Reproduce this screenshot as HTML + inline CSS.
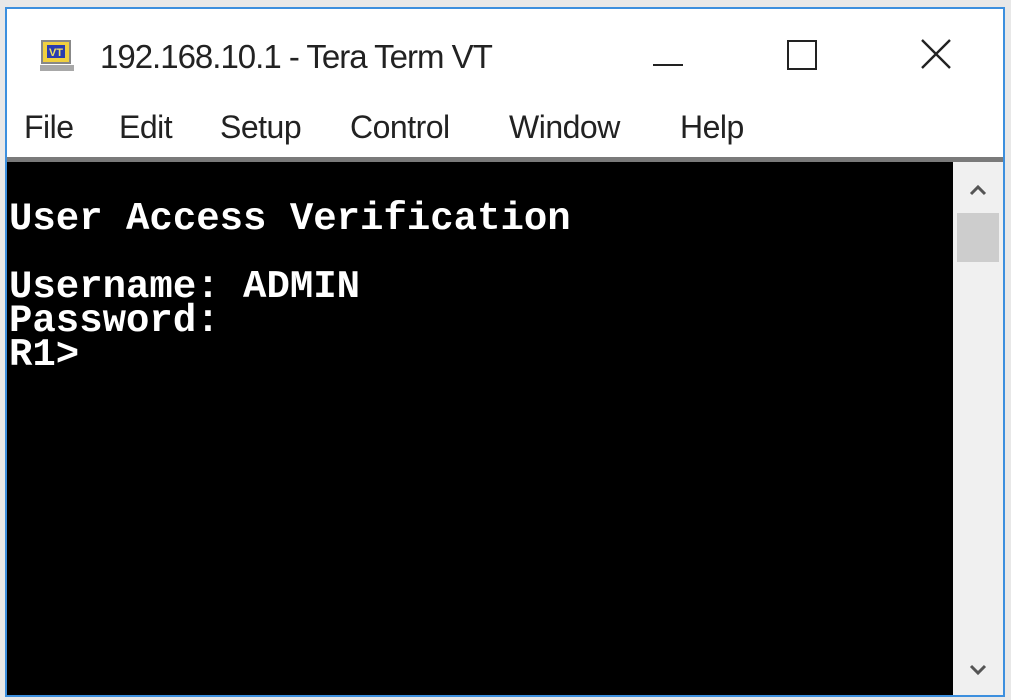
<!DOCTYPE html>
<html><head><style>
*{box-sizing:border-box}
body{margin:0;width:1011px;height:700px;background:#e8e8e8;position:relative;overflow:hidden;font-family:"Liberation Sans",sans-serif}
.win{position:absolute;left:5px;top:7px;width:1000px;height:690px;background:#fff;border:2px solid #3c8fde}
.t{position:absolute;color:#222;white-space:nowrap}
.term{position:absolute;left:0;top:148px;width:946px;height:538px;background:#000;border-top:5px solid #7a7a7a}
.sb{position:absolute;left:946px;top:148px;width:50px;height:538px;background:#f0f0f0;border-top:5px solid #7a7a7a}
pre{margin:0;position:absolute;left:2px;top:40px;color:#fff;font:bold 39px/34px "Liberation Mono",monospace}
</style></head><body>
<div class="win">
  <svg style="position:absolute;left:32px;top:30px" width="36" height="36" viewBox="0 0 36 36">
    <rect x="3" y="2" width="28" height="22" fill="#f0d040" stroke="#888" stroke-width="2"/>
    <rect x="8" y="6" width="18" height="13" fill="#2a3cb0"/>
    <text x="17" y="17" fill="#f0e060" font-size="11" font-weight="bold" text-anchor="middle" font-family="Liberation Sans">VT</text>
    <rect x="1" y="26" width="34" height="6" fill="#a8a8a8"/>
  </svg>
  <div class="t" style="left:93px;top:29px;font-size:33px;letter-spacing:-1px">192.168.10.1 - Tera Term VT</div>
  <div style="position:absolute;left:646px;top:55px;width:30px;height:2px;background:#222"></div>
  <div style="position:absolute;left:780px;top:31px;width:30px;height:30px;border:2px solid #222"></div>
  <svg style="position:absolute;left:913px;top:29px" width="32" height="32"><path d="M2 2L30 30M30 2L2 30" stroke="#222" stroke-width="2.4"/></svg>
  <div class="t" style="left:17px;top:100px;font-size:32px;letter-spacing:-0.5px">File</div>
  <div class="t" style="left:112px;top:100px;font-size:32px;letter-spacing:-0.5px">Edit</div>
  <div class="t" style="left:213px;top:100px;font-size:32px;letter-spacing:-0.5px">Setup</div>
  <div class="t" style="left:343px;top:100px;font-size:32px;letter-spacing:-0.5px">Control</div>
  <div class="t" style="left:502px;top:100px;font-size:32px;letter-spacing:-0.5px">Window</div>
  <div class="t" style="left:673px;top:100px;font-size:32px;letter-spacing:-0.5px">Help</div>
  <div class="term"><pre>User Access Verification

Username: ADMIN
Password:
R1&gt;</pre></div>
  <div class="sb">
    <svg style="position:absolute;left:16px;top:22px" width="18" height="12"><path d="M2 10L9 3L16 10" stroke="#555" stroke-width="3" fill="none"/></svg>
    <div style="position:absolute;left:4px;top:51px;width:42px;height:49px;background:#cdcdcd"></div>
    <svg style="position:absolute;left:16px;top:502px" width="18" height="12"><path d="M2 2L9 9L16 2" stroke="#555" stroke-width="3" fill="none"/></svg>
  </div>
</div>
</body></html>
